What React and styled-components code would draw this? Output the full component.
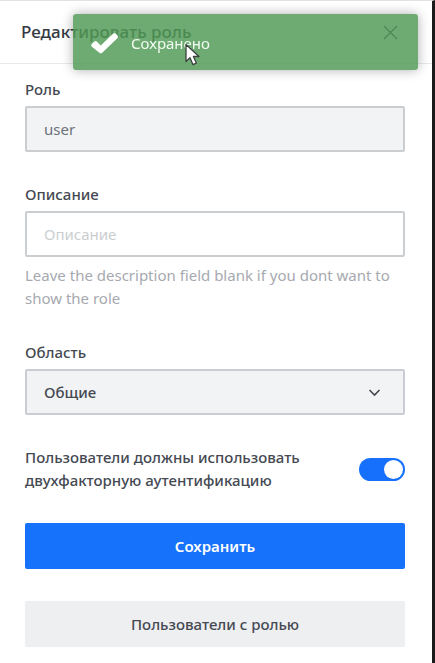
import React, { useState } from "react";
import styled, { createGlobalStyle } from "styled-components";

const GlobalStyle = createGlobalStyle`
  *, *::before, *::after { box-sizing: border-box; }
  body {
    margin: 0;
    background: #fff;
    color: #444952;
    font: 550 15px/23px "Noto Sans", "Open Sans", sans-serif;
  }
  button, input, select { font: inherit; color: inherit; }
`;

const Panel = styled.main`
  min-height: 100vh;
  border-top: 1px solid #e2e2e4;
  border-right: 3px solid #1b1b1b;
  background: #fff;
`;

const Header = styled.header`
  display: flex;
  align-items: center;
  justify-content: space-between;
  height: 63px;
  padding: 0 33px 0 21px;
  border-bottom: 1px solid #e8e9eb;
`;

const Title = styled.h1`
  margin: 0;
  font-size: 17px;
  line-height: 24px;
  font-weight: 550;
  color: #343943;
`;

const CloseButton = styled.button`
  display: flex;
  padding: 0;
  border: 0;
  background: none;
  color: #2f343d;
`;

const Form = styled.form`
  display: flex;
  flex-direction: column;
  gap: 31px;
  padding: 14px 27px 16px 25px;
`;

const Field = styled.div`
  display: flex;
  flex-direction: column;
`;

const Label = styled.label`
  margin-bottom: 5px;
`;

const Input = styled.input`
  width: 100%;
  height: 46px;
  padding: 0 17px;
  border: 2px solid #cbced1;
  border-radius: 2px;
  background: #fff;
  font-weight: 400;
  outline: none;
  &::placeholder { color: #cbced1; opacity: 1; }
  &:disabled { background: #f2f3f5; color: #6c727a; opacity: 1; }
`;

const Hint = styled.p`
  margin: 7px 0 0;
  font-weight: 450;
  color: #a6a9b0;
`;

const SelectBox = styled.div`
  display: grid;
  align-items: center;
  & > * { grid-area: 1 / 1; }
  & > svg { justify-self: end; margin-right: 24px; pointer-events: none; }
`;

const Select = styled.select`
  appearance: none;
  width: 100%;
  height: 46px;
  padding: 0 44px 0 17px;
  border: 2px solid #c9cdd3;
  border-radius: 2px;
  background: #f2f3f5;
  outline: none;
`;

const ToggleRow = styled.div`
  display: flex;
  align-items: center;
  justify-content: space-between;
  gap: 32px;
`;

const Switch = styled.input`
  appearance: none;
  display: flex;
  flex: none;
  width: 46px;
  height: 23px;
  margin: 0;
  padding: 2px;
  border-radius: 12px;
  background: #cbced1;
  &::before {
    content: "";
    width: 19px;
    height: 19px;
    border-radius: 50%;
    background: #fff;
  }
  &:checked { justify-content: flex-end; background: #1670fb; }
`;

const Actions = styled.div`
  display: flex;
  flex-direction: column;
  gap: 32px;
`;

const Button = styled.button`
  height: 46px;
  border: 0;
  border-radius: 2px;
  background: ${(p) => (p.$primary ? "#1672fb" : "#eeeff1")};
  color: ${(p) => (p.$primary ? "#fff" : "#444952")};
  font-weight: ${(p) => (p.$primary ? 600 : 550)};
`;

const Toast = styled.div`
  position: fixed;
  top: 14px;
  left: 73px;
  right: 17px;
  display: flex;
  align-items: center;
  gap: 12px;
  height: 56px;
  padding: 3px 17px 0;
  border-radius: 3px;
  background: rgba(81, 154, 85, 0.83);
  box-shadow: 0 0 12px rgba(0, 0, 0, 0.32);
  color: #f3fbf3;
  font-weight: 450;
`;

const Pointer = styled.svg`
  position: fixed;
  top: 43px;
  left: 184px;
  pointer-events: none;
`;

export default function App() {
  const [twoFactor, setTwoFactor] = useState(true);

  return (
    <>
      <GlobalStyle />
      <Panel>
        <Header>
          <Title>Редактировать роль</Title>
          <CloseButton type="button" aria-label="Закрыть">
            <svg width="17" height="17" viewBox="0 0 17 17" fill="none" stroke="currentColor" strokeWidth="1.2">
              <path d="M2 2l13 13M15 2L2 15" />
            </svg>
          </CloseButton>
        </Header>
        <Form onSubmit={(e) => e.preventDefault()}>
          <Field>
            <Label htmlFor="role">Роль</Label>
            <Input id="role" defaultValue="user" disabled />
          </Field>
          <Field>
            <Label htmlFor="description">Описание</Label>
            <Input id="description" placeholder="Описание" aria-describedby="description-hint" />
            <Hint id="description-hint">
              Leave the description field blank if you dont want to show the role
            </Hint>
          </Field>
          <Field>
            <Label htmlFor="scope">Область</Label>
            <SelectBox>
              <Select id="scope" defaultValue="global">
                <option value="global">Общие</option>
              </Select>
              <svg width="13" height="9" viewBox="0 0 13 9" fill="none" stroke="#42474f" strokeWidth="1.6">
                <path d="M1.5 2l5 5 5-5" />
              </svg>
            </SelectBox>
          </Field>
          <ToggleRow>
            <label htmlFor="two-factor">
              Пользователи должны использовать двухфакторную аутентификацию
            </label>
            <Switch
              id="two-factor"
              type="checkbox"
              role="switch"
              checked={twoFactor}
              onChange={(e) => setTwoFactor(e.target.checked)}
            />
          </ToggleRow>
          <Actions>
            <Button type="submit" $primary>Сохранить</Button>
            <Button type="button">Пользователи с ролью</Button>
          </Actions>
        </Form>
      </Panel>
      <Toast role="status">
        <svg width="29" height="23" viewBox="0 0 29 23" fill="#fff">
          <path d="M1.6 12.2l2.7-2.7q1.2-1 2.4 0l4.1 4.1L23.2 1.5q1.2-1 2.4.1l2 2q1 1.2 0 2.4L12.2 20.7q-1.4 1.1-2.8 0L1.6 14.5q-1-1.2 0-2.3z" />
        </svg>
        Сохранено
      </Toast>
      <Pointer width="18" height="24" viewBox="0 0 18 24" aria-hidden="true">
        <path d="M2 1.5v17l4-3.8 3 7 3.4-1.5-3-6.7H15z" fill="#fff" stroke="#3c423e" strokeWidth="1.3" strokeLinejoin="round" />
      </Pointer>
    </>
  );
}
